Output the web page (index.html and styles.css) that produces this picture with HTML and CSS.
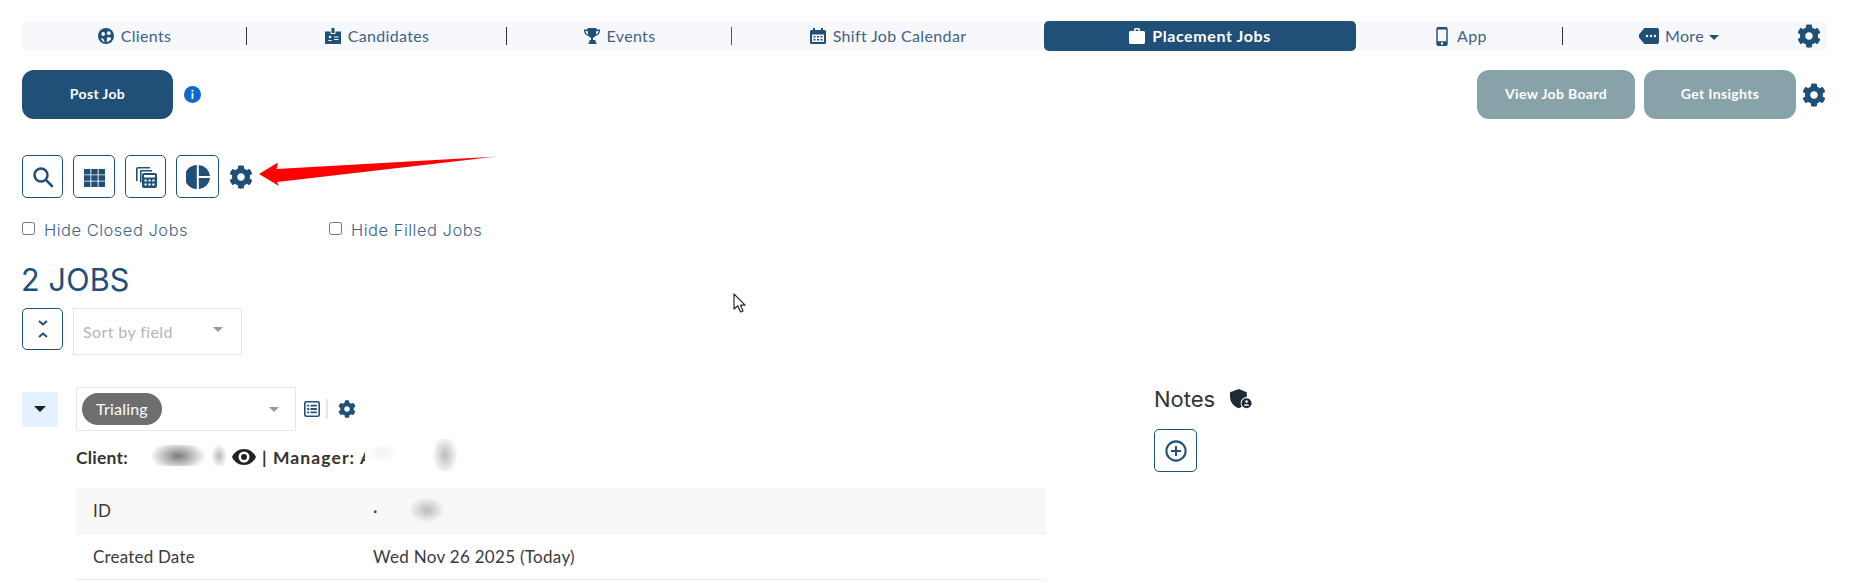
FILE: index.html
```html
<!DOCTYPE html>
<html lang="en">
<head>
<meta charset="utf-8">
<title>Placement Jobs</title>
<link rel="stylesheet" href="styles.css">
</head>
<body>
<svg class="defs" width="0" height="0" aria-hidden="true">
  <symbol id="gear" viewBox="0 0 512 512"><path d="M487.4 315.7l-42.6-24.6c4.3-23.2 4.3-47 0-70.2l42.6-24.6c4.9-2.8 7.1-8.6 5.5-14-11.1-35.6-30-67.8-54.7-94.6-3.8-4.1-10-5.1-14.8-2.3L380.8 110c-17.9-15.4-38.5-27.3-60.8-35.1V25.8c0-5.6-3.9-10.5-9.4-11.7-36.7-8.2-74.3-7.8-109.2 0-5.5 1.2-9.4 6.1-9.4 11.7V75c-22.2 7.9-42.8 19.8-60.8 35.1L88.7 85.5c-4.9-2.8-11-1.9-14.8 2.3-24.7 26.7-43.6 58.9-54.7 94.6-1.7 5.4.6 11.2 5.5 14L67.3 221c-4.3 23.2-4.3 47 0 70.2l-42.6 24.6c-4.9 2.8-7.1 8.6-5.5 14 11.1 35.6 30 67.8 54.7 94.6 3.8 4.1 10 5.1 14.8 2.3l42.6-24.6c17.9 15.4 38.5 27.3 60.8 35.1v49.2c0 5.6 3.9 10.5 9.4 11.7 36.7 8.2 74.3 7.8 109.2 0 5.5-1.2 9.4-6.1 9.4-11.7v-49.2c22.2-7.9 42.8-19.8 60.8-35.1l42.6 24.6c4.9 2.8 11 1.9 14.8-2.3 24.7-26.7 43.6-58.9 54.7-94.6 1.5-5.5-.7-11.3-5.6-14.1zM256 336c-44.1 0-80-35.9-80-80s35.9-80 80-80 80 35.9 80 80-35.9 80-80 80z"/></symbol>
</svg>
<div class="page">
  <nav class="nav">
    <a class="nav-item sep-dark">
      <svg class="ico" viewBox="0 0 16 16"><circle cx="8" cy="8" r="8"/><circle cx="5.2" cy="6" r="1.9" fill="#f7f8fb"/><circle cx="10.8" cy="5.2" r="1.9" fill="#f7f8fb"/><path d="M3 10c1.5 0 3 .8 3.6 4.2C4.800 13.800 3.500 12 3 10zM9 9.500c1.600-.6 3.200-.4 4.300.5-.6 2-2.200 3.600-4.700 4.200.4-1.800.3-3.300.4-4.700z" fill="#f7f8fb"/></svg>
      <span>Clients</span>
    </a>
    <a class="nav-item sep-dark">
      <svg class="ico" viewBox="0 0 16 16"><path d="M6.500 0h3v5h-3zM0 3.500h5.500V6h5V3.500H16V16H0z"/><circle cx="5" cy="9" r="1.300" fill="#f7f8fb"/><path d="M2.800 13c0-1.500 4.400-1.500 4.400 0zM9 8.500h4.500v1H9zM9 11h4.500v1H9z" fill="#f7f8fb"/></svg>
      <span>Candidates</span>
    </a>
    <a class="nav-item sep-blue">
      <svg class="ico" viewBox="0 0 16 16"><path d="M3.500 0h9v1.500H16c0 4-1.500 6-4.500 6.500-.5.800-1.500 1.500-2.500 1.700V12h2.500v2.500h1V16h-8v-1.500h1V12H7V9.700C6 9.500 5 8.800 4.500 8 1.500 7.500 0 5.500 0 1.500h3.500zM1.500 3c.1 2 .9 3 2.500 3.500L3.600 3zM14.500 3h-2.100l-.4 3.500C13.600 6 14.400 5 14.500 3z"/></svg>
      <span>Events</span>
    </a>
    <a class="nav-item">
      <svg class="ico" viewBox="0 0 16 16"><path d="M3 0h2v2h6V0h2v2h1.500A1.500 1.500 0 0 1 16 3.500v11a1.500 1.500 0 0 1-1.500 1.500h-13A1.500 1.500 0 0 1 0 14.500v-11A1.500 1.500 0 0 1 1.500 2H3z"/><path d="M2 6.500h12V14H2z" fill="#f7f8fb"/><path d="M3.500 8h2v1.600h-2zM7 8h2v1.600H7zM10.500 8h2v1.600h-2zM3.500 11h2v1.600h-2zM7 11h2v1.600H7zM10.500 11h2v1.600h-2z"/></svg>
      <span>Shift Job Calendar</span>
    </a>
    <a class="nav-item active">
      <svg class="ico" viewBox="0 0 16 16"><path d="M5 3V1.500C5 .700 5.700 0 6.500 0h3c.8 0 1.500.7 1.500 1.500V3h3.500c.8 0 1.500.7 1.500 1.500v10c0 .8-.7 1.500-1.500 1.500h-13C.700 16 0 15.300 0 14.500v-10C0 3.700.700 3 1.500 3zM6.500 1.500V3h3V1.500z" fill="#fff" fill-rule="evenodd"/></svg>
      <span>Placement Jobs</span>
    </a>
    <a class="nav-item sep-dark item-shift">
      <svg class="ico ico-phone" viewBox="0 0 12 20"><path fill-rule="evenodd" d="M2 0h8a2 2 0 0 1 2 2v16a2 2 0 0 1-2 2H2a2 2 0 0 1-2-2V2a2 2 0 0 1 2-2zM1.500 2.500v12.500h9V2.500zM6 16a1.300 1.300 0 1 0 0 2.600A1.300 1.300 0 0 0 6 16z"/></svg>
      <span>App</span>
    </a>
    <a class="nav-item item-shift">
      <svg class="ico ico-tag" viewBox="0 0 20 16"><path d="M5.500 0H18a2 2 0 0 1 2 2v12a2 2 0 0 1-2 2H5.500L0 9.500v-3z"/><circle cx="8" cy="8" r="1.200" fill="#f7f8fb"/><circle cx="12" cy="8" r="1.200" fill="#f7f8fb"/><circle cx="16" cy="8" r="1.200" fill="#f7f8fb"/></svg>
      <span>More</span><i class="caret caret-nav"></i>
    </a>
    <a class="nav-gear"><svg class="gear gear-22"><use href="#gear"/></svg></a>
  </nav>

  <div class="actions">
    <div class="actions-left">
      <button class="btn btn-primary">Post Job</button>
      <svg class="info" viewBox="0 0 17 17"><circle cx="8.500" cy="8.500" r="8.500" fill="#0b6bcb"/><rect x="7.600" y="7" width="1.800" height="6" rx=".5" fill="#fff"/><circle cx="8.500" cy="4.800" r="1.100" fill="#fff"/></svg>
    </div>
    <div class="actions-right">
      <button class="btn btn-muted btn-board">View Job Board</button>
      <button class="btn btn-muted btn-insights">Get Insights</button>
      <svg class="gear gear-24 gear-actions"><use href="#gear"/></svg>
    </div>
  </div>

  <div class="toolbar">
    <button class="tool">
      <svg class="tool-ico outline" viewBox="0 0 22 22" stroke="#204f78" stroke-width="2.500"><circle cx="9" cy="9" r="6.500"/><path d="M13.800 13.800L20 20" stroke-linecap="round"/></svg>
    </button>
    <button class="tool tool-wide">
      <svg class="tool-ico" viewBox="0 0 22 22"><path d="M1 3h6.400v5.400H1zM8.300 3h6.400v5.400H8.300zM15.600 3H22v5.400h-6.400zM1 9.300h6.400v5.400H1zM8.300 9.300h6.400v5.400H8.300zM15.600 9.300H22v5.400h-6.400zM1 15.600h6.400V21H1zM8.300 15.600h6.400V21H8.300zM15.600 15.600H22V21h-6.400z"/></svg>
    </button>
    <button class="tool">
      <svg class="tool-ico" viewBox="0 0 22 22"><path d="M3 1h12v1.600H3.500a.9.9 0 0 0-.9.9V15H1V3a2 2 0 0 1 2-2z"/><path d="M6 4h11v1.500H6.500v11H5V5a1 1 0 0 1 1-1z"/><path fill-rule="evenodd" d="M9 7h11a2 2 0 0 1 2 2v11a2 2 0 0 1-2 2H9a2 2 0 0 1-2-2V9a2 2 0 0 1 2-2zM9 9v2.500h11V9z"/><g fill="#fff"><rect x="9.500" y="13.500" width="2.200" height="2"/><rect x="13.400" y="13.500" width="2.200" height="2"/><rect x="17.300" y="13.500" width="2.200" height="2"/><rect x="9.500" y="17.500" width="2.200" height="2"/><rect x="13.400" y="17.500" width="2.200" height="2"/><rect x="17.300" y="17.500" width="2.200" height="2"/></g></svg>
    </button>
    <button class="tool tool-widest">
      <svg class="tool-pie" viewBox="0 0 24 24"><path d="M10.800 0v24A12 12 0 0 1 10.800 0zM12.800 0A12 12 0 0 1 24 11H12.800zM12.800 13H24a12 12 0 0 1-11.200 11z"/></svg>
    </button>
    <svg class="gear gear-24"><use href="#gear"/></svg>
  </div>

  <div class="filters">
    <label class="check check-closed"><input type="checkbox"><span>Hide Closed Jobs</span></label>
    <label class="check"><input type="checkbox"><span>Hide Filled Jobs</span></label>
  </div>

  <h1 class="title">2 JOBS</h1>

  <div class="sort-row">
    <button class="tool">
      <svg class="collapse-ico outline" viewBox="0 0 12 20" stroke="#204f78" stroke-width="2"><path d="M2 2l4 3.500L10 2M2 18l4-3.500L10 18"/></svg>
    </button>
    <div class="select select-sort"><span class="placeholder">Sort by field</span><i class="caret caret-grey"></i></div>
  </div>

  <div class="content">
    <section class="job">
      <div class="job-head">
        <button class="toggle"><i class="caret caret-dark"></i></button>
        <div class="select select-status"><span class="pill">Trialing</span><i class="caret caret-grey"></i></div>
        <svg class="list-ico" viewBox="0 0 16 16"><rect class="outline" x=".8" y=".8" width="14.400" height="14.400" rx="1.500" stroke="#204f78" stroke-width="1.600"/><path d="M3.200 3.800h2v1.800h-2zM3.200 7.100h2v1.800h-2zM3.200 10.400h2v1.800h-2zM6.500 3.800h6.300v1.800H6.500zM6.500 7.100h6.300v1.800H6.500zM6.500 10.400h6.300v1.800H6.500z"/></svg>
        <span class="vsep"></span>
        <svg class="gear gear-18"><use href="#gear"/></svg>
      </div>
      <div class="meta">
        <span>Client:</span>
        <span class="blur blur-client"></span>
        <svg class="eye" viewBox="0 0 24 16"><path fill="#222" fill-rule="evenodd" d="M12 0c5.500 0 9.800 3.400 12 8-2.200 4.600-6.500 8-12 8S2.200 12.600 0 8c2.200-4.600 6.500-8 12-8zm0 2.500a5.500 5.500 0 1 0 0 11 5.500 5.500 0 0 0 0-11zm0 2.500a3 3 0 1 1 0 6 3 3 0 0 1 0-6z"/></svg>
        <span class="manager">| Manager: A</span>
        <span class="blur blur-manager"></span>
      </div>
      <div class="table">
        <div class="row row-alt"><span class="cell-key">ID</span><span class="cell-val">·<span class="blur blur-id"></span></span></div>
        <div class="row"><span class="cell-key">Created Date</span><span class="cell-val">Wed Nov 26 2025 (Today)</span></div>
      </div>
    </section>
    <aside class="notes">
      <div class="notes-head">
        <h2>Notes</h2>
        <svg class="shield" viewBox="0 0 21 19"><path d="M8.500 0l7.500 3v4.500a6 6 0 0 0-4.800 9.300c-.8.600-1.700 1.100-2.700 1.500C3.500 16.500 0 12.500 0 7V3z" fill="#1e2b35"/><circle cx="15.800" cy="13.500" r="4.800" fill="#1e2b35"/><circle cx="15.800" cy="12" r="1.200" fill="#fff"/><path d="M13.200 16c.4-1.900 4.800-1.900 5.200 0z" fill="#fff"/></svg>
      </div>
      <button class="tool tool-plus">
        <svg class="plus-ico outline" viewBox="0 0 24 24" stroke="#204f78" stroke-width="2.200"><circle cx="12" cy="12" r="10.500"/><path d="M12 6.500v11M6.500 12h11"/></svg>
      </button>
    </aside>
  </div>

  <svg class="arrow" viewBox="0 0 240 32" aria-hidden="true">
    <defs><linearGradient id="arrowfade" x1="0" x2="1" y1="0" y2="0"><stop offset="0" stop-color="#f00"/><stop offset=".9" stop-color="#f00"/><stop offset="1" stop-color="#f00" stop-opacity=".5"/></linearGradient></defs>
    <path d="M1 18L20 6.500 18.500 13 239 .5 19 26 21 30z" fill="url(#arrowfade)"/>
  </svg>
  <svg class="cursor" viewBox="0 0 13 20" aria-hidden="true"><path d="M1 1v15l3.800-3.300L7.500 19l2.600-1.100-2.600-5.700h4.600z" fill="#fff" stroke="#2a2a35" stroke-width="1.200" stroke-linejoin="round"/></svg>
</div>
</body>
</html>
```
FILE: styles.css
```css
* { box-sizing: border-box; }
html, body { margin: 0; height: 583px; overflow: hidden; background: #fff; }
body { font-family: "Lato", "Noto Sans", sans-serif; color: #333; }
.defs { position: absolute; }
h1, h2 { margin: 0; font-weight: 400; }
button { font-family: inherit; cursor: pointer; }
.page { position: relative; padding: 21px 37px 0 22px; height: 583px; overflow: hidden; }
svg { display: block; fill: #204f78; flex: none; }
svg.outline, rect.outline { fill: none; }

.nav {
  display: grid;
  grid-template-columns: 225px 260px 225px 312px 312px 207px 228px 36px;
  height: 30px;
  background: #f7f8fb;
  border-radius: 5px;
}
.nav-item {
  position: relative;
  display: flex;
  align-items: center;
  justify-content: center;
  gap: 7px;
  font-size: 16px;
  letter-spacing: .35px;
  color: #3f6385;
}
.nav-item span { margin-bottom: 2px; }
.nav-item::after { content: ""; position: absolute; right: 0; top: 6px; bottom: 6px; width: 1px; }
.sep-dark::after { background: #333; }
.sep-blue::after { background: #1d6a9e; }
.active { background: #204f78; color: #fff; font-weight: 700; border-radius: 5px; letter-spacing: .6px; }
.item-shift { padding-left: 4px; }
.ico { width: 16px; height: 16px; }
.ico-phone { width: 12px; height: 19px; margin-right: 2px; }
.ico-tag { width: 20px; height: 16px; margin-right: -1px; }
.nav-gear { display: flex; align-items: center; justify-content: center; }
.gear-22 { width: 24px; height: 24px; }
.gear-24 { width: 24px; height: 24px; }
.gear-18 { width: 18px; height: 18px; }
.gear-actions { margin-right: 1px; }
.caret { display: block; width: 0; height: 0; border-style: solid; border-color: transparent; border-width: 6px 6px 0; }
.caret-nav { border-top-color: #204f78; border-width: 5px 5px 0; margin: 3px 0 0 -2px; }
.caret-grey { border-top-color: #999; border-width: 5.500px 5.500px 0; }
.caret-dark { border-top-color: #1d1d24; border-width: 6px 6.500px 0; }

.actions { display: flex; justify-content: space-between; align-items: center; margin-top: 19px; height: 49px; }
.actions-left, .actions-right { display: flex; align-items: center; }
.btn { height: 49px; padding: 0 0 2px; border: 0; border-radius: 12px; color: #fff; font-size: 14px; font-weight: 700; letter-spacing: .35px; }
.btn-primary { width: 151px; background: #204f78; }
.info { width: 17px; height: 17px; margin-left: 11px; }
.btn-muted { background: #87a2a8; }
.btn-board { width: 158px; margin-right: 9px; }
.btn-insights { width: 152px; margin-right: 6px; }

.toolbar { display: flex; align-items: center; gap: 10px; margin-top: 36px; }
.tool {
  display: flex; align-items: center; justify-content: center;
  width: 41px; height: 43px; padding: 0;
  background: #fff; border: 1.500px solid #204f78; border-radius: 5px;
}
.tool-wide { width: 42px; }
.tool-widest { width: 43px; }
.tool-ico { width: 22px; height: 22px; }
.tool-pie { width: 24px; height: 24px; }

.filters { display: flex; margin-top: 20px; height: 24px; }
.check { display: flex; align-items: center; font-family: "Inter", sans-serif; font-weight: 300; font-size: 16.500px; color: #3f6385; letter-spacing: .5px; }
.check-closed { width: 307px; }
.check input { width: 13px; height: 13px; margin: -3px 9px 0 0; }

.title { margin: 19px 0 0 -1px; font-family: "Inter", sans-serif; font-size: 30.500px; line-height: 38px; color: #204f78; letter-spacing: .2px; }
.sort-row { display: flex; align-items: flex-start; gap: 10px; margin-top: 9px; }
.sort-row .tool { width: 41px; height: 42px; }
.collapse-ico { width: 12px; height: 20px; }
.select { display: flex; align-items: center; justify-content: space-between; background: #fff; border: 1.500px solid #e6e6e6; }
.select-sort { width: 169px; height: 47px; padding: 0 18px 4px 9px; }
.placeholder { font-size: 16px; color: #b5b5b5; letter-spacing: .4px; padding-top: 4px; }

.content { display: grid; grid-template-columns: 1024px 1fr; margin-top: 32px; column-gap: 108px; }
.job-head { display: flex; align-items: center; height: 44px; }
.toggle { display: flex; align-items: center; justify-content: center; width: 36px; height: 35px; padding: 0; background: #e3f0ff; border: 0; border-radius: 4px; }
.select-status { width: 220px; height: 44px; margin-left: 18px; padding: 0 16px 0 5px; }
.pill { width: 80px; height: 32px; line-height: 31px; text-align: center; border-radius: 16px; background: #6e6e6e; color: #fff; font-size: 16px; letter-spacing: .2px; }
.list-ico { width: 16px; height: 16px; margin-left: 8px; }
.vsep { width: 2px; height: 20px; margin: 0 10px 0 6px; background: #e6e6e6; }

.meta { position: relative; display: flex; align-items: center; height: 30px; margin: 11px 0 0 54px; font-size: 17.500px; font-weight: 700; color: #333; letter-spacing: .2px; }
.blur { position: absolute; display: block; background-repeat: no-repeat; }
.blur-client {
  left: 57px; top: 3px; width: 95px; height: 21px;
  background:
    radial-gradient(ellipse 28px 15px at 45px 11px, #7a7a7a, rgba(255,255,255,0)),
    radial-gradient(ellipse 8px 12px at 86px 11px, #bbb, rgba(255,255,255,0)), #fff;
}
.eye { width: 26px; height: 16px; margin-left: 103px; }
.manager { margin-left: 5px; white-space: nowrap; letter-spacing: 1.100px; }
.blur-manager {
  left: 289px; top: -3px; width: 92px; height: 32px;
  background:
    radial-gradient(ellipse 13px 20px at 80px 16px, #bbb, rgba(255,255,255,0)),
    radial-gradient(ellipse 16px 10px at 17px 14px, #f3f3f3, rgba(255,255,255,0)), #fff;
}
.table { width: 970px; margin: 16px 0 0 54px; }
.row { display: flex; align-items: center; height: 46px; padding-left: 17px; border-bottom: 1px solid #eceeef; font-size: 17px; color: #3a3a3a; letter-spacing: .2px; }
.row-alt { background: #f8f8f8; }
.cell-key { width: 280px; }
.cell-val { position: relative; letter-spacing: .3px; }
.blur-id {
  left: 26px; top: -3px; width: 56px; height: 28px;
  background: radial-gradient(ellipse 18px 13px at 28px 13px, #bbb, rgba(248,248,248,0));
}
.notes-head { display: flex; align-items: center; gap: 15px; height: 24px; }
.notes-head h2 { font-family: "Inter", sans-serif; font-size: 22px; color: #333; }
.shield { width: 22px; height: 20px; }
.tool-plus { width: 43px; margin-top: 18px; }
.plus-ico { width: 22px; height: 22px; }

.arrow { position: absolute; left: 258px; top: 156px; width: 240px; height: 32px; }
.cursor { position: absolute; left: 733px; top: 293px; width: 13px; height: 20px; }
```
